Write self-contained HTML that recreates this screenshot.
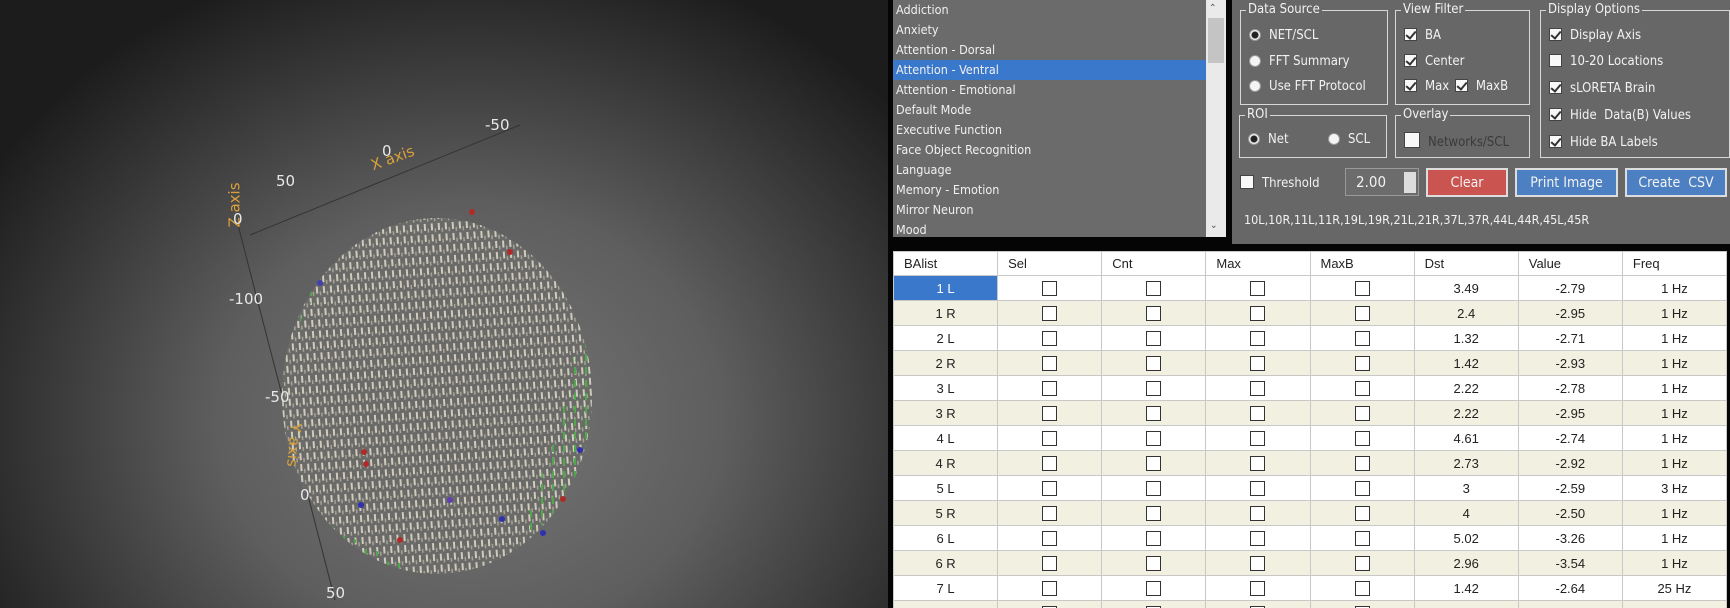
<!DOCTYPE html>
<html style="width:1730px;height:608px;overflow:hidden"><head><meta charset="utf-8"><style>
*{margin:0;padding:0;box-sizing:border-box}
html,body{overflow:hidden}
body{width:1730px;height:608px;background:#050505;position:relative;overflow:hidden;font-family:"DejaVu Sans Condensed","Liberation Sans",sans-serif}
.abs{position:absolute}
#left{left:0;top:0;width:888px;height:608px;background:radial-gradient(ellipse 560px 480px at 470px 420px,#777 0%,#5e5e5e 45%,#363636 78%,#1c1c1c 100%)}
#list{left:893px;top:0;width:313px;height:237px;background:#6b6b6b;color:#f0f0f0;font-size:12.5px}
#list div{height:20px;line-height:20px;padding-left:3px}
#list .sel{background:#3a78cc}
#sb{left:1206px;top:0;width:20px;height:237px;background:#eaeaea}
#panel{left:1232px;top:0;width:498px;height:244px;background:#676767;color:#f2f2f2;font-size:13px}
.grp{position:absolute;border:1px solid #d8d8d8}
.grp .t{position:absolute;top:-9px;left:5px;background:#676767;padding:0 2px;line-height:16px}
.it{position:absolute;line-height:16px;white-space:nowrap}
.rad{display:inline-block;width:12px;height:12px;border-radius:50%;background:#f4f4f4;vertical-align:-2px;margin-right:8px;border:1px solid #999}
.rad.on{background:radial-gradient(circle,#222 3px,#f4f4f4 4px)}
.cb{display:inline-block;width:13px;height:13px;background:#f8f8f8;border:1px solid #444;vertical-align:-2px;margin-right:8px;position:relative}
.cb.on::after{content:"";position:absolute;left:3px;top:0px;width:4px;height:8px;border:solid #333;border-width:0 2px 2px 0;transform:rotate(40deg)}
.btn{position:absolute;top:168px;height:29px;line-height:27px;text-align:center;font-size:14px;border:2px solid #ddd}
#tbl{left:893px;top:251px;width:834px;border-collapse:collapse;font-family:"Liberation Sans Narrow","Liberation Sans",sans-serif;font-size:13px;color:#222}
#tbl td{height:25px;border:1px solid #c8c8c8;text-align:center;width:104px;padding:0}
#tbl tr.h td{text-align:left;padding-left:10px;background:#fff;height:24px}
#tbl tr:nth-child(odd):not(.h) td{background:#f2f0e0}
#tbl tr:nth-child(even) td{background:#fff}
.bx{display:inline-block;width:15px;height:15px;border:1px solid #333;vertical-align:middle;background:#fff}
.ax{position:absolute;color:#e8e8e8;font-size:15px;font-family:"DejaVu Sans","Liberation Sans",sans-serif}
.axl{position:absolute;color:#d9a13a;font-size:15px;font-family:"DejaVu Sans","Liberation Sans",sans-serif}
</style></head><body>
<div id="left" class="abs">
<svg width="888" height="608" style="position:absolute;left:0;top:0">
<defs>
<pattern id="p1" width="7" height="11" patternUnits="userSpaceOnUse" patternTransform="rotate(-4)">
<rect x="1" y="0" width="2" height="7" fill="#e2dccb"/>
<rect x="4.5" y="5" width="1.5" height="4" fill="#cfc9b8" opacity="0.7"/>
</pattern>
<pattern id="p2" width="11" height="13" patternUnits="userSpaceOnUse">
<rect x="2" y="3" width="2" height="7" fill="#4fa84a"/>
</pattern>
<clipPath id="c"><ellipse cx="437" cy="396" rx="155" ry="178"/></clipPath>
</defs>
<g stroke="#333" stroke-width="1" fill="none">
<line x1="250" y1="235" x2="520" y2="125"/>
<line x1="238" y1="225" x2="335" y2="600"/>
</g>
<g clip-path="url(#c)">
<ellipse cx="437" cy="396" rx="155" ry="178" fill="#6a6a68"/>
<rect x="270" y="200" width="340" height="400" fill="url(#p1)" opacity="0.85"/>
<path d="M282 300 A155 178 0 0 0 470 574 L420 574 L282 500Z" fill="url(#p2)"/>
<path d="M590 300 A155 178 0 0 1 520 540 L560 420Z" fill="url(#p2)"/>
<path d="M300 240 L340 230 L300 330Z" fill="url(#p2)"/>
</g>
<g>
<circle cx="364" cy="452" r="3" fill="#b02a2a"/><circle cx="366" cy="464" r="3" fill="#b02a2a"/>
<circle cx="472" cy="212" r="3" fill="#b02a2a"/><circle cx="510" cy="252" r="3" fill="#b02a2a"/>
<circle cx="563" cy="499" r="3" fill="#b02a2a"/><circle cx="400" cy="540" r="3" fill="#b02a2a"/>
<circle cx="320" cy="283" r="3" fill="#4040b0"/><circle cx="361" cy="505" r="3" fill="#3030b0"/>
<circle cx="502" cy="519" r="3" fill="#3030b0"/><circle cx="543" cy="533" r="3" fill="#3030b0"/>
<circle cx="580" cy="450" r="3" fill="#3030b0"/><circle cx="450" cy="500" r="3" fill="#6040b0"/>
</g>
</svg>
<div class="ax" style="left:485px;top:116px">-50</div>
<div class="ax" style="left:382px;top:142px">0</div>
<div class="axl" style="left:370px;top:149px;transform:rotate(-20deg)">X axis</div>
<div class="ax" style="left:276px;top:172px">50</div>
<div class="axl" style="left:212px;top:196px;transform:rotate(-90deg)">Z axis</div>
<div class="ax" style="left:233px;top:210px">0</div>
<div class="ax" style="left:229px;top:290px">-100</div>
<div class="ax" style="left:265px;top:388px">-50</div>
<div class="axl" style="left:272px;top:436px;transform:rotate(95deg)">Y axis</div>
<div class="ax" style="left:300px;top:486px">0</div>
<div class="ax" style="left:326px;top:584px">50</div>
</div>

<div id="list" class="abs">
<div>Addiction</div><div>Anxiety</div><div>Attention - Dorsal</div><div class="sel">Attention - Ventral</div><div>Attention - Emotional</div><div>Default Mode</div><div>Executive Function</div><div>Face Object Recognition</div><div>Language</div><div>Memory - Emotion</div><div>Mirror Neuron</div><div>Mood</div>
</div>
<div id="sb" class="abs">
<div class="abs" style="left:3px;top:3px;font-size:10px;color:#555">&#8963;</div>
<div class="abs" style="left:2px;top:18px;width:16px;height:45px;background:#c4c4c4"></div>
<div class="abs" style="left:4px;top:220px;font-size:10px;color:#555">&#8964;</div>
</div>

<div id="panel" class="abs">
<div class="grp" style="left:8px;top:10px;width:148px;height:95px"><span class="t">Data Source</span>
<div class="it" style="left:8px;top:17px"><span class="rad on"></span>NET/SCL</div>
<div class="it" style="left:8px;top:43px"><span class="rad"></span>FFT Summary</div>
<div class="it" style="left:8px;top:68px"><span class="rad"></span>Use FFT Protocol</div></div>
<div class="grp" style="left:163px;top:10px;width:135px;height:95px"><span class="t">View Filter</span>
<div class="it" style="left:8px;top:17px"><span class="cb on"></span>BA</div>
<div class="it" style="left:8px;top:43px"><span class="cb on"></span>Center</div>
<div class="it" style="left:8px;top:68px"><span class="cb on"></span>Max <span class="cb on" style="margin-left:2px"></span>MaxB</div></div>
<div class="grp" style="left:308px;top:10px;width:190px;height:148px"><span class="t">Display Options</span>
<div class="it" style="left:8px;top:17px"><span class="cb on"></span>Display Axis</div>
<div class="it" style="left:8px;top:43px"><span class="cb"></span>10-20 Locations</div>
<div class="it" style="left:8px;top:70px"><span class="cb on"></span>sLORETA Brain</div>
<div class="it" style="left:8px;top:97px"><span class="cb on"></span>Hide &nbsp;Data(B) Values</div>
<div class="it" style="left:8px;top:124px"><span class="cb on"></span>Hide BA Labels</div></div>
<div class="grp" style="left:7px;top:115px;width:148px;height:43px"><span class="t">ROI</span>
<div class="it" style="left:8px;top:16px"><span class="rad on"></span>Net</div>
<div class="it" style="left:88px;top:16px"><span class="rad"></span>SCL</div></div>
<div class="grp" style="left:163px;top:115px;width:135px;height:43px"><span class="t">Overlay</span>
<div class="it" style="left:8px;top:16px;color:#3a3a3a"><span class="cb" style="width:16px;height:16px"></span>Networks/SCL</div></div>
<div class="it" style="left:8px;top:175px"><span class="cb" style="width:14px;height:14px"></span>Threshold</div>
<div class="abs" style="left:113px;top:168px;width:74px;height:28px;border:1px solid #999;background:#6c6c6c;font-size:15px;line-height:26px;padding-left:10px">2.00<span class="abs" style="right:2px;top:3px;width:12px;height:21px;background:#ddd"></span></div>
<div class="btn" style="left:194px;width:82px;background:#c95450">Clear</div>
<div class="btn" style="left:283px;width:103px;background:#4d80c2">Print Image</div>
<div class="btn" style="left:393px;width:102px;background:#4d80c2">Create &nbsp;CSV</div>
<div class="it" style="left:12px;top:212px;font-size:12.5px">10L,10R,11L,11R,19L,19R,21L,21R,37L,37R,44L,44R,45L,45R</div>
</div>

<div class="abs" style="left:893px;top:251px;width:834px;height:357px;overflow:hidden">
<table id="tbl" style="position:absolute;left:0;top:0">
<tr class="h"><td>BAlist</td><td>Sel</td><td>Cnt</td><td>Max</td><td>MaxB</td><td>Dst</td><td>Value</td><td>Freq</td></tr>
<tr><td style="background:#3a78cc;color:#fff">1 L</td><td><span class="bx"></span></td><td><span class="bx"></span></td><td><span class="bx"></span></td><td><span class="bx"></span></td><td>3.49</td><td>-2.79</td><td>1 Hz</td></tr>
<tr><td>1 R</td><td><span class="bx"></span></td><td><span class="bx"></span></td><td><span class="bx"></span></td><td><span class="bx"></span></td><td>2.4</td><td>-2.95</td><td>1 Hz</td></tr>
<tr><td>2 L</td><td><span class="bx"></span></td><td><span class="bx"></span></td><td><span class="bx"></span></td><td><span class="bx"></span></td><td>1.32</td><td>-2.71</td><td>1 Hz</td></tr>
<tr><td>2 R</td><td><span class="bx"></span></td><td><span class="bx"></span></td><td><span class="bx"></span></td><td><span class="bx"></span></td><td>1.42</td><td>-2.93</td><td>1 Hz</td></tr>
<tr><td>3 L</td><td><span class="bx"></span></td><td><span class="bx"></span></td><td><span class="bx"></span></td><td><span class="bx"></span></td><td>2.22</td><td>-2.78</td><td>1 Hz</td></tr>
<tr><td>3 R</td><td><span class="bx"></span></td><td><span class="bx"></span></td><td><span class="bx"></span></td><td><span class="bx"></span></td><td>2.22</td><td>-2.95</td><td>1 Hz</td></tr>
<tr><td>4 L</td><td><span class="bx"></span></td><td><span class="bx"></span></td><td><span class="bx"></span></td><td><span class="bx"></span></td><td>4.61</td><td>-2.74</td><td>1 Hz</td></tr>
<tr><td>4 R</td><td><span class="bx"></span></td><td><span class="bx"></span></td><td><span class="bx"></span></td><td><span class="bx"></span></td><td>2.73</td><td>-2.92</td><td>1 Hz</td></tr>
<tr><td>5 L</td><td><span class="bx"></span></td><td><span class="bx"></span></td><td><span class="bx"></span></td><td><span class="bx"></span></td><td>3</td><td>-2.59</td><td>3 Hz</td></tr>
<tr><td>5 R</td><td><span class="bx"></span></td><td><span class="bx"></span></td><td><span class="bx"></span></td><td><span class="bx"></span></td><td>4</td><td>-2.50</td><td>1 Hz</td></tr>
<tr><td>6 L</td><td><span class="bx"></span></td><td><span class="bx"></span></td><td><span class="bx"></span></td><td><span class="bx"></span></td><td>5.02</td><td>-3.26</td><td>1 Hz</td></tr>
<tr><td>6 R</td><td><span class="bx"></span></td><td><span class="bx"></span></td><td><span class="bx"></span></td><td><span class="bx"></span></td><td>2.96</td><td>-3.54</td><td>1 Hz</td></tr>
<tr><td>7 L</td><td><span class="bx"></span></td><td><span class="bx"></span></td><td><span class="bx"></span></td><td><span class="bx"></span></td><td>1.42</td><td>-2.64</td><td>25 Hz</td></tr>
<tr><td>7 R</td><td><span class="bx"></span></td><td><span class="bx"></span></td><td><span class="bx"></span></td><td><span class="bx"></span></td><td>1.42</td><td>-2.64</td><td>1 Hz</td></tr>
</table>
</div>
</body></html>
